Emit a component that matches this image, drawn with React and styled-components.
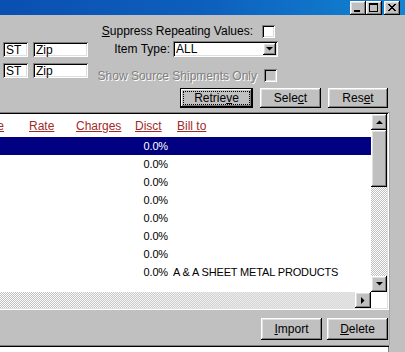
import React from "react"
import styled, { createGlobalStyle } from "styled-components"

const GlobalStyle = createGlobalStyle`
  html, body {
    margin: 0;
    padding: 0;
    background: #c0c0c0;
    overflow: hidden;
  }
  body {
    font-family: "Liberation Sans", Arial, sans-serif;
    font-size: 12px;
    color: #000;
  }
`

const rows = [
  { disct: "0.0%", billTo: "", selected: true },
  { disct: "0.0%", billTo: "" },
  { disct: "0.0%", billTo: "" },
  { disct: "0.0%", billTo: "" },
  { disct: "0.0%", billTo: "" },
  { disct: "0.0%", billTo: "" },
  { disct: "0.0%", billTo: "" },
  { disct: "0.0%", billTo: "A & A SHEET METAL PRODUCTS" },
]

const Arrow = ({ dir }) => {
  const pts = {
    up: "0,4 7,4 3.5,0.5",
    down: "0,0 7,0 3.5,3.5",
    right: "0,0 0,7 3.5,3.5",
  }[dir]
  const size = dir === "right" ? { w: 4, h: 7 } : { w: 7, h: 4 }
  return (
    <svg width={size.w} height={size.h} viewBox={`0 0 ${size.w} ${size.h}`}>
      <polygon points={pts} fill="#000" />
    </svg>
  )
}

const App = () => {
  return (
    <Window>
      <GlobalStyle />
      <TitleBar>
        <CaptionButton>
          <svg width="16" height="14" viewBox="0 0 16 14">
            <rect x="4" y="9" width="6" height="2" fill="#000" />
          </svg>
        </CaptionButton>
        <CaptionButton>
          <svg width="16" height="14" viewBox="0 0 16 14">
            <rect x="3.5" y="2.5" width="8" height="8" fill="none" stroke="#000" />
            <rect x="3" y="2" width="9" height="2" fill="#000" />
          </svg>
        </CaptionButton>
        <CaptionButton $gap>
          <svg width="16" height="14" viewBox="0 0 16 14">
            <path d="M4 3 L11 10 M5 3 L12 10 M11 3 L4 10 M12 3 L5 10" stroke="#000" strokeWidth="1" />
          </svg>
        </CaptionButton>
      </TitleBar>

      <Main>
        <FilterArea>
          <FilterRow $h={14} $mb={3}>
            <Spacer />
            <RightCell>
              <Label $mr={9}>
                <u>S</u>uppress Repeating Values:
              </Label>
              <CheckBox $mr={3} />
            </RightCell>
          </FilterRow>

          <FilterRow $h={16} $mb={6}>
            <Field $w={25} $mt={1}>ST</Field>
            <Field $w={55} $mt={1}>Zip</Field>
            <RightCell>
              <Label $mr={3}>Item Type:</Label>
              <Select>
                <SelectText>ALL</SelectText>
                <DropButton>
                  <Arrow dir="down" />
                </DropButton>
              </Select>
            </RightCell>
          </FilterRow>

          <FilterRow $h={19} $mb={0}>
            <Field $w={25}>ST</Field>
            <Field $w={55}>Zip</Field>
            <RightCell $mt={6}>
              <Label $mr={7} $disabled>
                Show Source Shipments Only
              </Label>
              <CheckBox $mr={1} $disabled />
            </RightCell>
          </FilterRow>
        </FilterArea>

        <ButtonRow>
          <Button $w={73} $default>
            <Caption $focus>
              Retrie<u>v</u>e
            </Caption>
          </Button>
          <Button $w={61}>
            <Caption>
              Sele<u>c</u>t
            </Caption>
          </Button>
          <Button $w={60}>
            <Caption>
              Res<u>e</u>t
            </Caption>
          </Button>
        </ButtonRow>

        <LowerPanel>
          <ListView>
            <ListContent>
              <HeaderRow>
                <ClipCell>
                  <HeaderLink>e</HeaderLink>
                </ClipCell>
                <HeaderCell $pl={24}>
                  <HeaderLink>Rate</HeaderLink>
                </HeaderCell>
                <HeaderCell $pl={5}>
                  <HeaderLink>Charges</HeaderLink>
                </HeaderCell>
                <HeaderCell $pl={5}>
                  <HeaderLink>Disct</HeaderLink>
                </HeaderCell>
                <HeaderCell $pl={6}>
                  <HeaderLink>Bill to</HeaderLink>
                </HeaderCell>
              </HeaderRow>
              {rows.map((row, i) => (
                <DataRow key={i} $selected={row.selected}>
                  <DataCell />
                  <DataCell />
                  <DataCell />
                  <DataCell $right>{row.disct}</DataCell>
                  <DataCell $pl={2}>{row.billTo}</DataCell>
                </DataRow>
              ))}
            </ListContent>

            <VScroll>
              <ScrollButton>
                <Arrow dir="up" />
              </ScrollButton>
              <Thumb />
              <Track />
              <ScrollButton>
                <Arrow dir="down" />
              </ScrollButton>
            </VScroll>

            <HScroll>
              <Track $fade />
              <ScrollButton>
                <Arrow dir="right" />
              </ScrollButton>
            </HScroll>

            <Corner />
          </ListView>

          <ActionRow>
            <Button $w={61} $h={22}>
              <Caption>
                <u>I</u>mport
              </Caption>
            </Button>
            <Button $w={61} $h={22}>
              <Caption>
                <u>D</u>elete
              </Caption>
            </Button>
          </ActionRow>
        </LowerPanel>

        <BottomPanel />
      </Main>
    </Window>
  )
}

export default App

const raised = `
  box-shadow: inset -1px -1px #000, inset 1px 1px #fff, inset -2px -2px #808080, inset 2px 2px #dfdfdf;
`

const sunken = `
  box-shadow: inset 1px 1px #808080, inset -1px -1px #fff, inset 2px 2px #000, inset -2px -2px #dfdfdf;
`

const Window = styled.div`
  width: 405px;
  height: 352px;
  display: flex;
  flex-direction: column;
  overflow: hidden;
  background: #c0c0c0;
`

const TitleBar = styled.div`
  height: 15px;
  flex-shrink: 0;
  display: flex;
  justify-content: flex-end;
  align-items: flex-start;
  padding: 1px 5px 0 0;
  box-sizing: border-box;
  background: linear-gradient(90deg, #0a4fb2 0%, #0d5fbd 50%, #1284d2 100%);
`

const CaptionButton = styled.div`
  width: 16px;
  height: 14px;
  margin-left: ${(p) => (p.$gap ? "2px" : "0")};
  background: #c0c0c0;
  display: flex;
  ${raised}
`

const Main = styled.div`
  width: 392px;
  display: flex;
  flex-direction: column;
`

const FilterArea = styled.div`
  display: flex;
  flex-direction: column;
  padding: 9px 0 0 3px;
`

const FilterRow = styled.div`
  display: flex;
  align-items: flex-start;
  height: ${(p) => p.$h}px;
  margin-bottom: ${(p) => p.$mb}px;
`

const Spacer = styled.div`
  width: 90px;
`

const Field = styled.div`
  width: ${(p) => p.$w}px;
  height: 15px;
  margin-top: ${(p) => p.$mt || 0}px;
  margin-right: 5px;
  box-sizing: border-box;
  padding: 2px 0 0 3px;
  background: #fff;
  font-size: 12px;
  line-height: 12px;
  ${sunken}
`

const RightCell = styled.div`
  width: 185px;
  height: ${(p) => (p.$mt ? "13px" : "100%")};
  margin-top: ${(p) => p.$mt || 0}px;
  display: flex;
  justify-content: flex-end;
  align-items: center;
`

const Label = styled.span`
  margin-right: ${(p) => p.$mr}px;
  font-size: 12px;
  white-space: nowrap;
  color: ${(p) => (p.$disabled ? "#808080" : "#000")};
  text-shadow: ${(p) => (p.$disabled ? "1px 1px 0 #fff" : "none")};
`

const CheckBox = styled.div`
  width: 13px;
  height: 13px;
  flex-shrink: 0;
  margin-right: ${(p) => p.$mr}px;
  box-sizing: border-box;
  background: ${(p) => (p.$disabled ? "#c0c0c0" : "#fff")};
  ${sunken}
`

const Select = styled.div`
  width: 105px;
  height: 16px;
  box-sizing: border-box;
  padding: 2px;
  display: flex;
  background: #fff;
  ${sunken}
`

const SelectText = styled.span`
  flex: 1;
  padding-left: 1px;
  font-size: 12px;
  line-height: 12px;
`

const DropButton = styled.div`
  width: 13px;
  height: 12px;
  display: flex;
  align-items: center;
  justify-content: center;
  background: #c0c0c0;
  ${raised}
`

const ButtonRow = styled.div`
  display: flex;
  justify-content: flex-end;
  gap: 7px;
  margin-top: 6px;
  padding-right: 4px;
`

const Button = styled.div`
  width: ${(p) => p.$w}px;
  height: ${(p) => p.$h || 20}px;
  box-sizing: border-box;
  padding: 3px;
  display: flex;
  background: #c0c0c0;
  font-size: 12px;
  ${(p) =>
    p.$default
      ? `box-shadow: inset 0 0 0 1px #000, inset -2px -2px #000, inset 2px 2px #fff, inset -3px -3px #808080;`
      : raised}
`

const Caption = styled.span`
  flex: 1;
  display: flex;
  align-items: center;
  justify-content: center;
  border: 1px dotted ${(p) => (p.$focus ? "#000" : "transparent")};
  white-space: nowrap;
`

const LowerPanel = styled.div`
  margin-top: 4px;
  display: flex;
  flex-direction: column;
  box-shadow: inset -2px 0 #c0c0c0, inset -3px 0 #a8a8a8;
`

const ListView = styled.div`
  width: 389px;
  height: 198px;
  box-sizing: border-box;
  padding: 2px 2px 2px 0;
  display: grid;
  grid-template-columns: 1fr 16px;
  grid-template-rows: 1fr 16px;
  background: #c0c0c0;
  box-shadow: inset 0 1px #808080, inset -1px -1px #fff, inset 0 2px #000, inset -2px -2px #dfdfdf;
`

const ListContent = styled.div`
  background: #fff;
  overflow: hidden;
`

const columns = "5px 66px 59px 41px 1fr"

const HeaderRow = styled.div`
  display: grid;
  grid-template-columns: ${columns};
  height: 23px;
  align-items: center;
`

const ClipCell = styled.div`
  display: flex;
  justify-content: flex-end;
  padding-right: 1px;
`

const HeaderCell = styled.div`
  padding-left: ${(p) => p.$pl}px;
  white-space: nowrap;
`

const HeaderLink = styled.span`
  color: #a02a2a;
  text-decoration: underline;
  font-size: 12px;
`

const DataRow = styled.div`
  display: grid;
  grid-template-columns: ${columns};
  height: 18px;
  align-items: center;
  font-size: 11px;
  letter-spacing: -0.15px;
  background: ${(p) => (p.$selected ? "#000080" : "#fff")};
  color: ${(p) => (p.$selected ? "#fff" : "#000")};
`

const DataCell = styled.div`
  white-space: nowrap;
  text-align: ${(p) => (p.$right ? "right" : "left")};
  padding-left: ${(p) => p.$pl || 0}px;
  padding-right: ${(p) => (p.$right ? "3px" : "0")};
`

const VScroll = styled.div`
  display: flex;
  flex-direction: column;
`

const HScroll = styled.div`
  display: flex;
`

const ScrollButton = styled.div`
  width: 16px;
  height: 16px;
  flex-shrink: 0;
  display: flex;
  align-items: center;
  justify-content: center;
  background: #c0c0c0;
  ${raised}
`

const Thumb = styled.div`
  height: 57px;
  flex-shrink: 0;
  background: #c0c0c0;
  ${raised}
`

const Track = styled.div`
  flex: 1;
  background-color: #fff;
  background-image: ${(p) =>
      p.$fade
        ? "linear-gradient(90deg, rgba(224,224,224,0) 0%, rgba(224,224,224,0.85) 100%), "
        : ""}
    repeating-conic-gradient(#c0c0c0 0 25%, #fff 0 50%);
  background-size: ${(p) => (p.$fade ? "100% 100%, " : "")}2px 2px;
`

const Corner = styled.div`
  background: #fff;
`

const ActionRow = styled.div`
  display: flex;
  justify-content: flex-end;
  gap: 5px;
  height: 35px;
  box-sizing: border-box;
  padding: 8px 4px 0 0;
`

const BottomPanel = styled.div`
  width: 389px;
  height: 10px;
  background: #fff;
  box-shadow: inset 0 1px #808080, inset 0 2px #000, inset -1px 0 #808080;
`
